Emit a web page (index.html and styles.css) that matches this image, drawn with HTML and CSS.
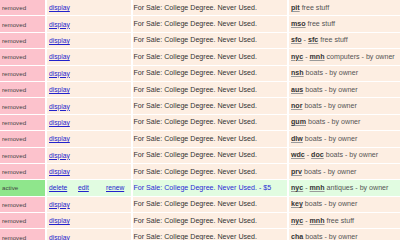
FILE: index.html
```html
<!DOCTYPE html>
<html lang="en">
<head>
    <meta charset="UTF-8">
    <title>My Postings</title>
    <link rel="stylesheet" href="styles.css">
</head>
<body>

    <table class="postings">
        <tr class="removed">
            <td class="status">removed</td>
            <td class="actions"><a href="#">display</a></td>
            <td class="title">For Sale: College Degree. Never Used.</td>
            <td class="area"><a href="#">pit</a> free stuff</td>
        </tr>
        <tr class="removed">
            <td class="status">removed</td>
            <td class="actions"><a href="#">display</a></td>
            <td class="title">For Sale: College Degree. Never Used.</td>
            <td class="area"><a href="#">mso</a> free stuff</td>
        </tr>
        <tr class="removed">
            <td class="status">removed</td>
            <td class="actions"><a href="#">display</a></td>
            <td class="title">For Sale: College Degree. Never Used.</td>
            <td class="area"><a href="#">sfo</a> - <a href="#">sfc</a> free stuff</td>
        </tr>
        <tr class="removed">
            <td class="status">removed</td>
            <td class="actions"><a href="#">display</a></td>
            <td class="title">For Sale: College Degree. Never Used.</td>
            <td class="area"><a href="#">nyc</a> - <a href="#">mnh</a> computers - by owner</td>
        </tr>
        <tr class="removed">
            <td class="status">removed</td>
            <td class="actions"><a href="#">display</a></td>
            <td class="title">For Sale: College Degree. Never Used.</td>
            <td class="area"><a href="#">nsh</a> boats - by owner</td>
        </tr>
        <tr class="removed">
            <td class="status">removed</td>
            <td class="actions"><a href="#">display</a></td>
            <td class="title">For Sale: College Degree. Never Used.</td>
            <td class="area"><a href="#">aus</a> boats - by owner</td>
        </tr>
        <tr class="removed">
            <td class="status">removed</td>
            <td class="actions"><a href="#">display</a></td>
            <td class="title">For Sale: College Degree. Never Used.</td>
            <td class="area"><a href="#">nor</a> boats - by owner</td>
        </tr>
        <tr class="removed">
            <td class="status">removed</td>
            <td class="actions"><a href="#">display</a></td>
            <td class="title">For Sale: College Degree. Never Used.</td>
            <td class="area"><a href="#">gum</a> boats - by owner</td>
        </tr>
        <tr class="removed">
            <td class="status">removed</td>
            <td class="actions"><a href="#">display</a></td>
            <td class="title">For Sale: College Degree. Never Used.</td>
            <td class="area"><a href="#">dlw</a> boats - by owner</td>
        </tr>
        <tr class="removed">
            <td class="status">removed</td>
            <td class="actions"><a href="#">display</a></td>
            <td class="title">For Sale: College Degree. Never Used.</td>
            <td class="area"><a href="#">wdc</a> - <a href="#">doc</a> boats - by owner</td>
        </tr>
        <tr class="removed">
            <td class="status">removed</td>
            <td class="actions"><a href="#">display</a></td>
            <td class="title">For Sale: College Degree. Never Used.</td>
            <td class="area"><a href="#">prv</a> boats - by owner</td>
        </tr>
        <tr class="active">
            <td class="status">active</td>
            <td class="actions">
                <div class="manage">
                    <span class="delete"><a href="#">delete</a></span>
                    <span class="edit"><a href="#">edit</a></span>
                    <span><a href="#">renew</a></span>
                </div>
            </td>
            <td class="title">For Sale: College Degree. Never Used. - $5</td>
            <td class="area"><a href="#">nyc</a> - <a href="#">mnh</a> antiques - by owner</td>
        </tr>
        <tr class="removed">
            <td class="status">removed</td>
            <td class="actions"><a href="#">display</a></td>
            <td class="title">For Sale: College Degree. Never Used.</td>
            <td class="area"><a href="#">key</a> boats - by owner</td>
        </tr>
        <tr class="removed">
            <td class="status">removed</td>
            <td class="actions"><a href="#">display</a></td>
            <td class="title">For Sale: College Degree. Never Used.</td>
            <td class="area"><a href="#">nyc</a> - <a href="#">mnh</a> free stuff</td>
        </tr>
        <tr class="removed">
            <td class="status">removed</td>
            <td class="actions"><a href="#">display</a></td>
            <td class="title">For Sale: College Degree. Never Used.</td>
            <td class="area"><a href="#">cha</a> boats - by owner</td>
        </tr>
    </table>

</body>
</html>
```

FILE: styles.css
```css
body {
    font-family: "Liberation Sans", Arial, sans-serif;
    background: #fff;
    margin: 0;
    overflow: hidden;
}

.postings {
    border-collapse: separate;
    border-spacing: 2px 1px;
    table-layout: fixed;
    width: 412px;
    margin: -1px 0 0 -2px;
    font-size: 7.1px;
    color: #333;
}

.postings tr {
    height: 15.4px;
}

.postings td {
    box-sizing: border-box;
    padding: 0 0 0 2px;
    vertical-align: middle;
    white-space: nowrap;
    background: #fdeee2;
}

a {
    color: #2323cc;
}

.status {
    width: 45px;
    font-size: 6.2px;
    color: #444;
}

.removed .status {
    background: #fcc2cc;
}

.active .status {
    background: #8fe68c;
}

.active td {
    background: #e1fce1;
}

.actions {
    width: 83.5px;
    font-size: 6.7px;
}

.manage {
    display: flex;
}

.manage .delete {
    width: 29px;
}

.manage .edit {
    width: 28px;
}

.title {
    width: 154.5px;
    padding-left: 1px !important;
}

.active .title {
    color: #2a2ad6;
}

.area {
    width: 119px;
    color: #555;
}

.area a {
    color: #333;
    font-weight: bold;
    text-decoration: underline;
    text-decoration-color: #9a9a9a;
}
```
